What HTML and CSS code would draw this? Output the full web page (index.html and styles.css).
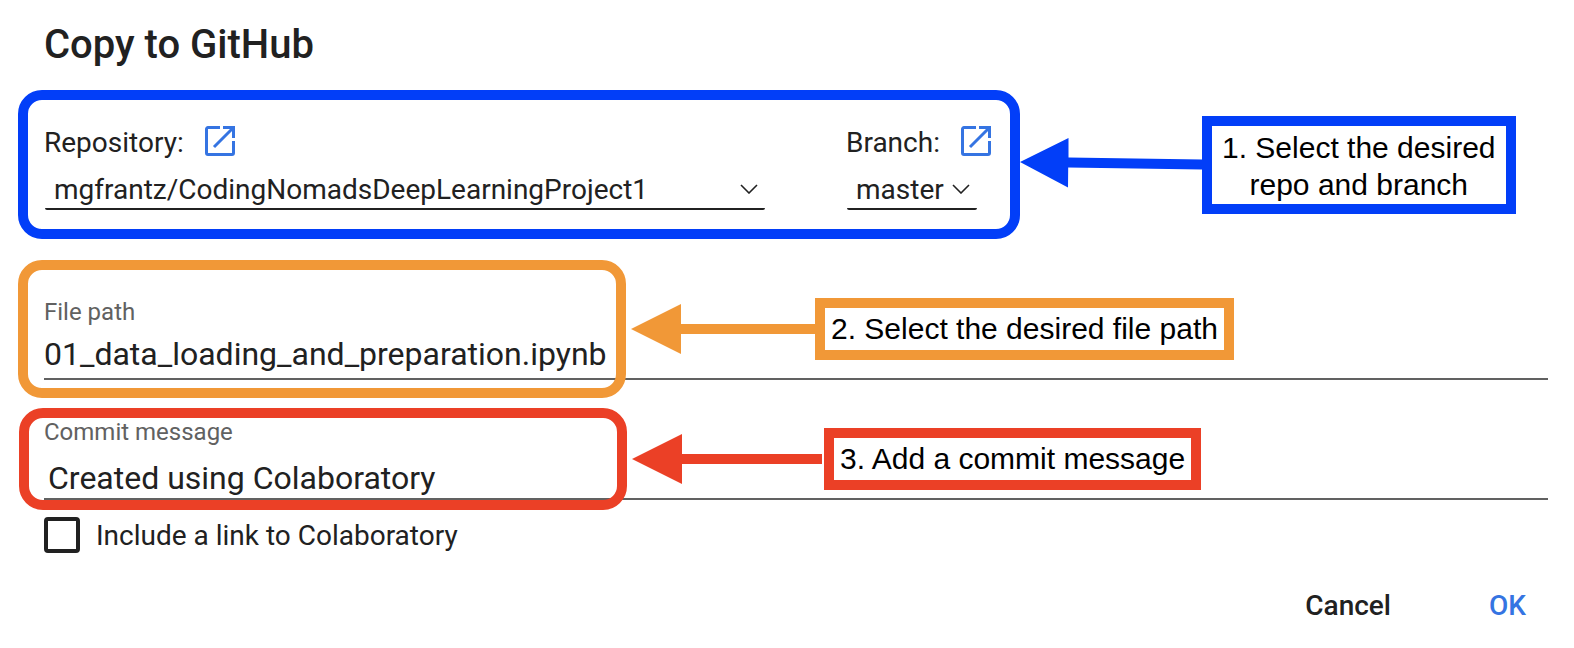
FILE: index.html
```html
<!DOCTYPE html>
<html lang="en">
<head>
<meta charset="utf-8">
<title>Copy to GitHub</title>
<link rel="stylesheet" href="styles.css">
</head>
<body>
<svg class="sprite" aria-hidden="true">
  <symbol id="open" viewBox="0 0 30 30">
    <path d="M15 1.5H3A1.5 1.5 0 0 0 1.5 3V27A1.5 1.5 0 0 0 3 28.5H27A1.5 1.5 0 0 0 28.5 27V15M18 1.5H28.5V12M28 2L9 21" fill="none" stroke="currentColor" stroke-width="3"/>
  </symbol>
  <symbol id="chevron" viewBox="0 0 18 10">
    <path d="M1 1L9 9L17 1" fill="none" stroke="currentColor" stroke-width="1.6"/>
  </symbol>
</svg>
<main class="dialog">
  <h1 class="title">Copy to GitHub</h1>

  <section class="step step-source">
    <div class="source">
      <div class="source-head">
        <label for="repo">Repository:</label>
        <a class="open-link" href="#repo" aria-label="Open repository"><svg><use href="#open"/></svg></a>
      </div>
      <div class="picker picker-repo">
        <select id="repo"><option>mgfrantz/CodingNomadsDeepLearningProject1</option></select>
        <svg class="chevron"><use href="#chevron"/></svg>
      </div>
    </div>
    <div class="source">
      <div class="source-head">
        <label for="branch">Branch:</label>
        <a class="open-link" href="#branch" aria-label="Open branch"><svg><use href="#open"/></svg></a>
      </div>
      <div class="picker picker-branch">
        <select id="branch"><option>master</option></select>
        <svg class="chevron"><use href="#chevron"/></svg>
      </div>
    </div>
    <div class="highlight"></div>
    <div class="note">
      <svg class="arrow" width="182" height="54" viewBox="0 0 182 54"><path d="M0 24L48.500 0V19.500L182 21.500V31.500L48.200 29.500L48 49.500Z" fill="currentColor"/></svg>
      <p class="note-text">1. Select the desired<br>repo and branch</p>
    </div>
  </section>

  <section class="step step-path">
    <label for="path">File path</label>
    <input id="path" type="text" value="01_data_loading_and_preparation.ipynb">
    <div class="highlight"></div>
    <div class="note">
      <svg class="arrow" width="184" height="50" viewBox="0 0 184 50"><path d="M0 25L50 0V20H184V30H50V50Z" fill="currentColor"/></svg>
      <p class="note-text">2. Select the desired file path</p>
    </div>
  </section>

  <section class="step step-message">
    <label for="message">Commit message</label>
    <input id="message" type="text" value="Created using Colaboratory">
    <div class="highlight"></div>
    <div class="note">
      <svg class="arrow" width="190" height="50" viewBox="0 0 190 50"><path d="M0 25L50 0V20H190V30H50V50Z" fill="currentColor"/></svg>
      <p class="note-text">3. Add a commit message</p>
    </div>
  </section>

  <label class="check"><input type="checkbox"><span>Include a link to Colaboratory</span></label>

  <footer class="actions">
    <button type="button">Cancel</button>
    <button type="button" class="primary">OK</button>
  </footer>
</main>
</body>
</html>
```
FILE: styles.css
```css
* { box-sizing: border-box; }

body {
  margin: 0;
  background: #fff;
  color: #212121;
  font: 28px/34px Roboto, sans-serif;
}

.sprite { position: absolute; width: 0; height: 0; }

.dialog { padding: 21px 26px 20px 44px; }

.title {
  margin: 0 0 21px;
  font-size: 40px;
  line-height: 48px;
  font-weight: 500;
}

.step { position: relative; }

.highlight {
  position: absolute;
  top: 0;
  bottom: 0;
  left: -26px;
  width: 608px;
  border: 10px solid;
  border-radius: 24px;
  pointer-events: none;
}

.step-source .highlight, .step-source .note { color: #023ef8; }
.step-path .highlight, .step-path .note { color: #f19837; }
.step-message .highlight, .step-message .note { color: #eb4026; }

.step-source {
  display: flex;
  gap: 81px;
  padding: 36px 0 29px;
  margin-bottom: 21px;
}
.step-source .highlight { width: 1002px; }
.step-message .highlight { left: -25px; }

.source-head {
  display: flex;
  gap: 21px;
  margin-bottom: 10px;
}

.open-link { color: #3574e2; height: 30px; }
.open-link svg { display: block; width: 30px; height: 30px; }

.picker { position: relative; margin-left: 1px; }
.picker-repo { width: 720px; }
.picker-branch { width: 130px; }

.picker select {
  display: block;
  appearance: none;
  width: 100%;
  height: 40px;
  padding: 2px 0 0 9px;
  border: 0;
  border-bottom: 2px solid #212121;
  border-radius: 2px;
  background: none;
  color: inherit;
  font: inherit;
}

.chevron {
  position: absolute;
  right: 7px;
  top: 14px;
  width: 18px;
  height: 10px;
  pointer-events: none;
}

.step-path {
  padding: 38px 0 18px;
  margin-bottom: 10px;
}
.step-message { padding: 10px 0; }

.step > label {
  display: block;
  color: #616161;
  font-size: 24px;
  line-height: 28px;
}

.step > input {
  display: block;
  width: 100%;
  height: 46px;
  margin-top: 8px;
  padding: 0 0 4px;
  border: 0;
  border-bottom: 2px solid #616161;
  background: none;
  color: inherit;
  font: inherit;
  font-size: 32px;
}

.step-message > input {
  height: 42px;
  margin-top: 12px;
  padding: 0 0 0 4px;
}

.note {
  position: absolute;
  display: flex;
  align-items: center;
  white-space: nowrap;
}
.step-source .note { left: 976px; top: 26px; }
.step-path .note { left: 587px; top: 38px; }
.step-message .note { left: 588px; top: 20px; gap: 2px; }

.note-text {
  margin: 0;
  padding: 3px 6px;
  border: 10px solid;
  background: #fff;
  font: 30px/36px "Liberation Sans", Arial, sans-serif;
  text-align: center;
  -webkit-text-fill-color: #000;
}
.step-source .note-text {
  padding: 3px 10px 1px;
  line-height: 37px;
}

.check {
  display: flex;
  align-items: center;
  gap: 16px;
  width: fit-content;
  margin-top: 7px;
}
.check span { padding-top: 2px; }
.check input {
  appearance: none;
  width: 36px;
  height: 36px;
  margin: 0;
  border: 4px solid #212121;
  border-radius: 4px;
}

.actions {
  display: flex;
  justify-content: flex-end;
  gap: 54px;
  margin-top: 32px;
}
.actions button {
  padding: 4px 22px;
  border: 0;
  background: none;
  color: inherit;
  font: inherit;
  font-weight: 500;
}
.actions .primary { color: #3574e2; }
```
